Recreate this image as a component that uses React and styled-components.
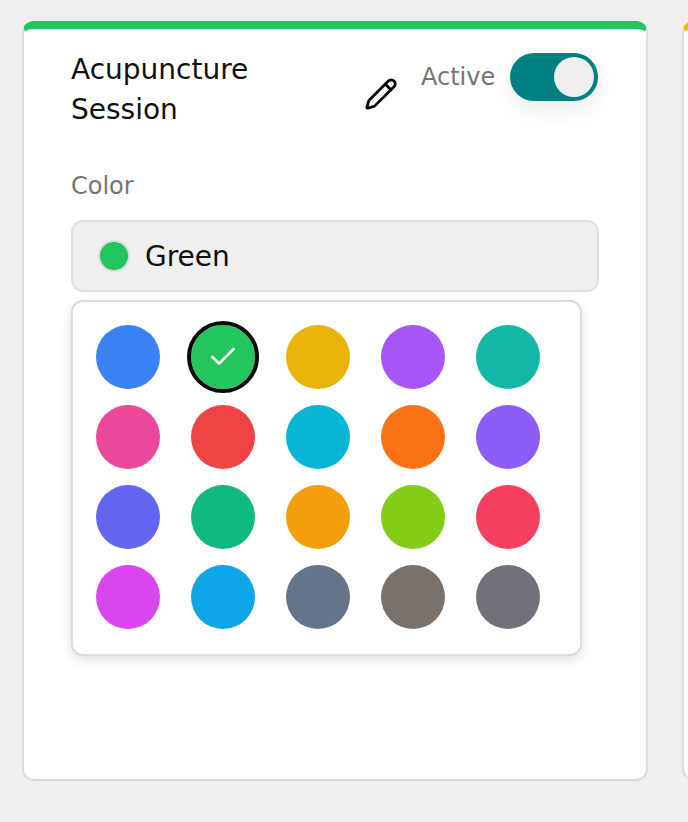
import React from 'react'
import styled, { createGlobalStyle } from 'styled-components'

const GlobalS = createGlobalStyle`
    html, body {
        margin: 0;
        padding: 0;
        background: #efefef;
    }
    body {
        font-family: "DejaVu Sans", sans-serif;
    }
`
const PageS = styled.div`
    width: 688px;
    height: 822px;
    overflow: hidden;
    display: flex;
    align-items: flex-start;
    gap: 34px;
    padding: 21px 0 0 22px;
    box-sizing: border-box;
`
const CardS = styled.section`
    flex: 0 0 626px;
    height: 760px;
    box-sizing: border-box;
    background: #fff;
    border: 2px solid #dcdcdc;
    border-top: 8px solid ${ props => props.$accent };
    border-radius: 12px;
    padding: 21px 47px 0 47px;
`
const HeaderS = styled.div`
    display: flex;
    align-items: flex-start;
`
const TitleS = styled.h2`
    margin: 0;
    width: 290px;
    font-size: 28px;
    line-height: 40px;
    font-weight: 400;
    color: #111;
`
const EditS = styled.button`
    padding: 0;
    margin: 26px 0 0 2px;
    width: 36px;
    height: 36px;
    border: none;
    background: none;
    color: #0a0a0a;
    display: flex;
    align-items: center;
    justify-content: center;
`
const ActiveS = styled.div`
    margin-left: 22px;
    margin-top: 3px;
    display: flex;
    align-items: center;
    gap: 15px;
`
const ActiveLabelS = styled.span`
    font-size: 24px;
    color: #757575;
`
const ToggleS = styled.div`
    width: 88px;
    height: 48px;
    box-sizing: border-box;
    padding: 4px;
    border-radius: 24px;
    background: #008080;
    display: flex;
    justify-content: flex-end;
    box-shadow: 0 10px 24px rgba(0, 0, 0, 0.07);
`
const KnobS = styled.div`
    width: 40px;
    height: 40px;
    border-radius: 50%;
    background: #efefef;
`
const LabelS = styled.div`
    margin-top: 40px;
    font-size: 24px;
    line-height: 32px;
    color: #757575;
`
const SelectS = styled.div`
    margin-top: 18px;
    width: 528px;
    height: 72px;
    box-sizing: border-box;
    border: 2px solid #dfdfdf;
    border-radius: 12px;
    background: #efefef;
    display: flex;
    align-items: center;
    gap: 15px;
    padding-left: 25px;
    font-size: 28px;
    color: #111;
`
const DotS = styled.span`
    width: 32px;
    height: 32px;
    box-sizing: border-box;
    border: 2px solid #dcdcdc;
    border-radius: 50%;
    background: ${ props => props.$color };
`
const PopoverS = styled.div`
    margin-top: 8px;
    width: 511px;
    height: 356px;
    box-sizing: border-box;
    border: 2px solid #dcdcdc;
    border-radius: 12px;
    background: #fff;
    box-shadow: 0 4px 12px rgba(0, 0, 0, 0.12);
    padding: 23px 0 0 23px;
    display: grid;
    grid-template-columns: repeat(5, 64px);
    grid-auto-rows: 64px;
    column-gap: 31px;
    row-gap: 16px;
`
const SwatchS = styled.div`
    width: 64px;
    height: 64px;
    border-radius: 50%;
    background: ${ props => props.$color };
    display: flex;
    align-items: center;
    justify-content: center;
    color: #fff;
    ${ props => props.$selected && 'outline: 4px solid #0a0a0a; outline-offset: 0;' }
`

const swatches = [
    '#3b82f6', '#22c55e', '#eab308', '#a855f7', '#14b8a6',
    '#ec4899', '#ef4444', '#06b6d4', '#f97316', '#8b5cf6',
    '#6366f1', '#10b981', '#f59e0b', '#84cc16', '#f43f5e',
    '#d946ef', '#0ea5e9', '#64748b', '#78716c', '#71717a'
]

const App = () => {
    return(
        <PageS>
            <GlobalS />
            <CardS $accent='#22c55e'>
                <HeaderS>
                    <TitleS>Acupuncture Session</TitleS>
                    <EditS aria-label='Edit'>
                        <svg width='34' height='34' viewBox='0 0 24 24' fill='none' stroke='currentColor' strokeWidth='2' strokeLinecap='round' strokeLinejoin='round'>
                            <path d='M21.2 6.8a2.8 2.8 0 0 0-4-4L3.8 16.2a2 2 0 0 0-.5.8l-1.3 4.4a.5.5 0 0 0 .6.6l4.4-1.3a2 2 0 0 0 .8-.5z' />
                            <path d='m15 5 4 4' />
                        </svg>
                    </EditS>
                    <ActiveS>
                        <ActiveLabelS>Active</ActiveLabelS>
                        <ToggleS><KnobS /></ToggleS>
                    </ActiveS>
                </HeaderS>
                <LabelS>Color</LabelS>
                <SelectS>
                    <DotS $color='#22c55e' />
                    Green
                </SelectS>
                <PopoverS>
                    {
                        swatches.map( (color, i) =>
                            <SwatchS key={ color } $color={ color } $selected={ i === 1 }>
                                { i === 1 &&
                                    <svg width='32' height='32' viewBox='0 0 24 24' fill='none' stroke='currentColor' strokeWidth='2' strokeLinecap='round' strokeLinejoin='round'>
                                        <path d='M20 6 9 17l-5-5' />
                                    </svg>
                                }
                            </SwatchS>
                        )
                    }
                </PopoverS>
            </CardS>
            <CardS $accent='#eab308' />
        </PageS>
    )
}
export default App
